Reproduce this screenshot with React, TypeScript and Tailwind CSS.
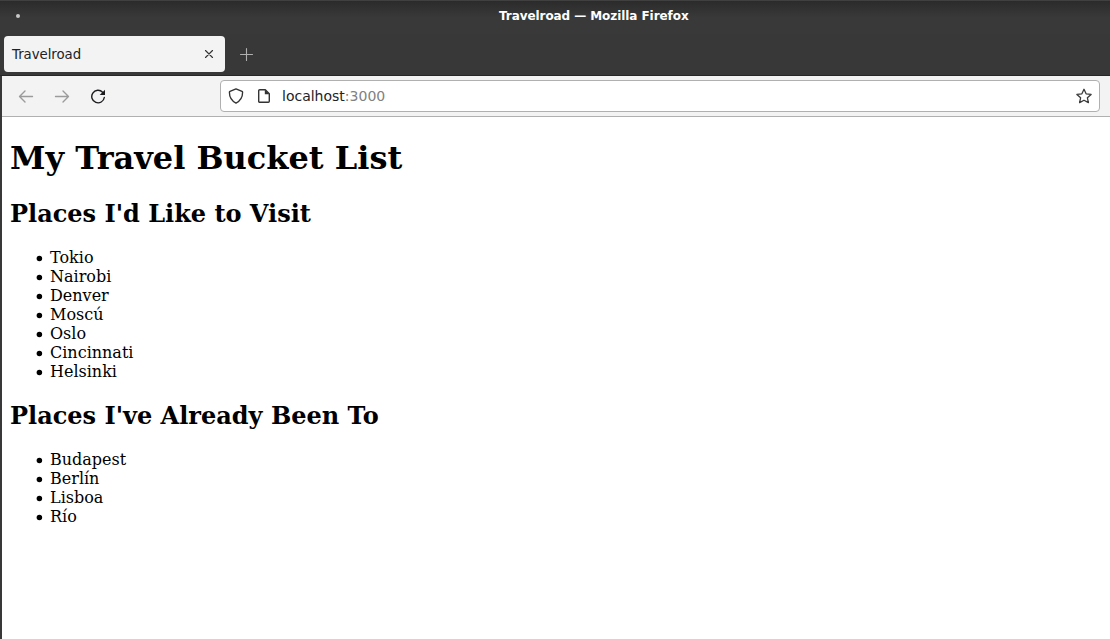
import React from "react";

const wishlist = ["Tokio", "Nairobi", "Denver", "Moscú", "Oslo", "Cincinnati", "Helsinki"];
const visited = ["Budapest", "Berlín", "Lisboa", "Río"];

function Places({ items }: { items: string[] }) {
  return (
    <ul className="pl-[26px] text-base leading-[19px]">
      {items.map((name) => (
        <li key={name} className="flex">
          <svg viewBox="0 0 14 19" className="h-[19px] w-[14px] shrink-0" fill="currentColor">
            <circle cx="3.4" cy="10.5" r="2.75" />
          </svg>
          {name}
        </li>
      ))}
    </ul>
  );
}

function Icon({ children, className }: { children: React.ReactNode; className: string }) {
  return (
    <svg
      viewBox="0 0 16 16"
      fill="none"
      stroke="currentColor"
      strokeWidth="1.25"
      strokeLinecap="round"
      strokeLinejoin="round"
      className={`size-4 shrink-0 ${className}`}
    >
      {children}
    </svg>
  );
}

export default function App() {
  return (
    <div className="flex h-[639px] w-full flex-col overflow-hidden bg-[#383838] font-['DejaVu_Sans',sans-serif]">
      <header className="flex h-[34px] shrink-0 items-center bg-linear-to-b from-[#2b2b2b] to-[#393939] to-50% border-t border-[#404040] pb-[3px]">
        <span className="ml-4 size-1 shrink-0 rounded-full bg-[#c8c8c8]" />
        <h1 className="ml-[479px] whitespace-nowrap text-[12px] font-bold leading-4 tracking-[-0.07px] text-white">
          Travelroad — Mozilla Firefox
        </h1>
      </header>
      <div className="flex h-[42px] shrink-0 items-start border-b border-[#29252b] pl-1 pt-[2px]">
        <div className="flex h-9 w-[221px] items-center justify-between rounded-[4px] bg-[#f3f3f3] pl-2 pr-2 text-[13.33px] text-[#222226]">
          <span className="pt-[2px] leading-4 tracking-[-0.05px]">Travelroad</span>
          <Icon className="text-[#333]">
            <path d="M4.5 4.5l7 7M11.5 4.5l-7 7" strokeWidth="1.15" />
          </Icon>
        </div>
        <Icon className="ml-[14px] mt-[10px] text-[#b0b0b0]">
          <path d="M7.5 2.5v12M1.5 8.5h12" strokeWidth="1.1" />
        </Icon>
      </div>
      <div className="flex min-h-0 flex-1 flex-col pl-[2px]">
        <nav className="flex h-[41px] shrink-0 items-center border-b border-[#b0b0b0] bg-[#f3f3f3] pl-4 pr-[10px]">
          <Icon className="text-[#9b9b9b]">
            <path d="M14.500 8.500H1.500M7 3L1.500 8.500 7 14" strokeWidth="1.35" />
          </Icon>
          <Icon className="ml-5 text-[#9b9b9b]">
            <path d="M1.500 8.500h13M9 3l5.500 5.500L9 14" strokeWidth="1.35" />
          </Icon>
          <Icon className="ml-5 text-[#1c1c1e]">
            <path d="M12.600 4.200A6.300 6.300 0 1 0 14.300 9.500" strokeWidth="1.4" />
            <path d="M15 1.700V7H9.700z" fill="currentColor" stroke="none" />
          </Icon>
          <div className="ml-[114px] flex h-8 flex-1 items-center rounded-[4px] border border-[#b0b0b0] bg-white px-[7px]">
            <Icon className="text-[#333]">
              <path d="M8 .9l6 2.500c.4.2.6.5.6.9 0 5-2 8.500-6.600 10.800C3.400 12.800 1.400 9.300 1.400 4.300c0-.4.2-.7.6-.9z" strokeWidth="1.35" />
            </Icon>
            <Icon className="ml-3 text-[#333]">
              <path d="M3.700 1.700h5.600l4 4v7.600a1 1 0 0 1-1 1H3.700a1 1 0 0 1-1-1V2.700a1 1 0 0 1 1-1z" strokeWidth="1.4" />
              <path d="M8.800 1.500V6.200h4.700z" fill="currentColor" stroke="none" />
            </Icon>
            <span className="ml-[10px] flex-1 text-[14px] leading-4 text-[#222226]">
              localhost<span className="text-[#818181]">:3000</span>
            </span>
            <Icon className="text-[#3a3a3a]">
              <path d="M8 1.300l2.100 4.500 5 .6-3.700 3.400 1 4.800L8 12.200l-4.400 2.400 1-4.800L.9 6.400l5-.6z" strokeWidth="1.3" />
            </Icon>
          </div>
        </nav>
        <main className="min-h-0 flex-1 bg-white px-2 pt-[22px] font-['DejaVu_Serif',serif] text-black">
          <h1 className="text-[32px] font-bold leading-[38px]">My Travel Bucket List</h1>
          <h2 className="mb-5 mt-[23px] text-2xl font-bold leading-7">Places I'd Like to Visit</h2>
          <Places items={wishlist} />
          <h2 className="my-5 pt-[1px] text-2xl font-bold leading-7">Places I've Already Been To</h2>
          <Places items={visited} />
        </main>
      </div>
    </div>
  );
}
